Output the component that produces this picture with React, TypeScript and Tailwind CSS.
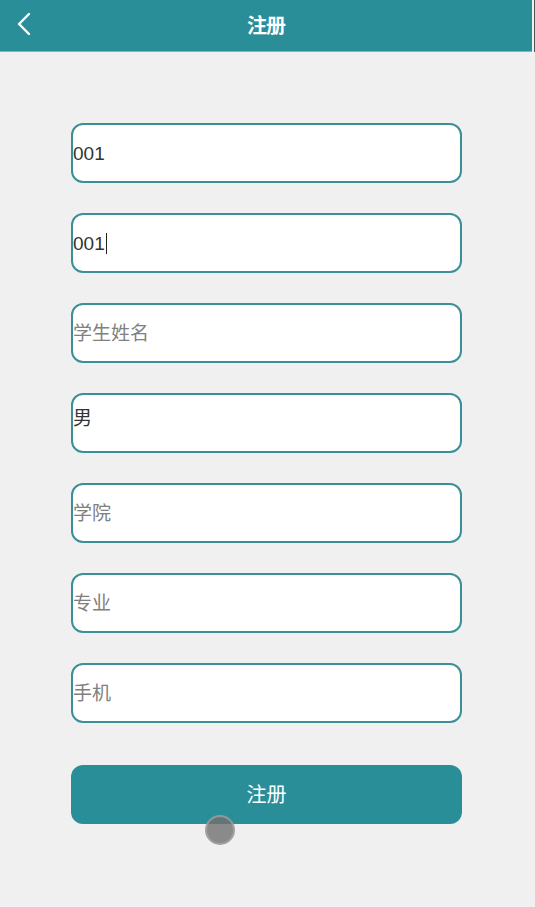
import React from "react";

const fields: { value?: string; placeholder: string; caret?: boolean; up?: boolean }[] = [
  { value: "001", placeholder: "学号" },
  { value: "001", placeholder: "密码", caret: true },
  { placeholder: "学生姓名" },
  { value: "男", placeholder: "性别", up: true },
  { placeholder: "学院" },
  { placeholder: "专业" },
  { placeholder: "手机" },
];

export default function App() {
  return (
    <div
      className="relative w-[535px] h-[907px] bg-[#f0f0f0] overflow-hidden"
      style={{ fontFamily: '"Liberation Sans", "Noto Sans CJK SC", sans-serif' }}
    >
      <div className="flex">
        <div className="relative w-[532px] h-[52px] bg-[#2a8e99] border-b border-[#7fb8bf] flex items-center justify-center">
          <svg className="absolute left-[14px] top-[12px]" width="20" height="24" viewBox="0 0 20 24">
            <path d="M15 2 L5 12 L15 22" fill="none" stroke="#ffffff" strokeWidth="2.4" strokeLinecap="round" strokeLinejoin="round" />
          </svg>
          <span className="text-white text-[20px] font-bold tracking-[-1px]">注册</span>
        </div>
        <div className="w-[3px] h-[52px] bg-[#f0f0f0] border-r border-[#555]" />
      </div>

      <div className="mt-[71px] ml-[71px] w-[391px] flex flex-col gap-[30px]">
        {fields.map((f, i) => (
          <div
            key={i}
            className="h-[60px] bg-white border-2 border-[#3b8f98] rounded-[12px] flex items-center"
          >
            <span
              className={
                "flex items-center text-[19px] leading-none " +
                (f.value ? "text-[#333333]" : "text-[#808080]") +
                (f.up ? " -mt-[9px]" : "")
              }
            >
              {f.value ?? f.placeholder}
              {f.caret && <span className="ml-[1px] w-[1px] h-[21px] bg-[#222]" />}
            </span>
          </div>
        ))}
      </div>

      <div className="relative mt-[42px] ml-[71px] w-[391px]">
        <button className="w-full h-[59px] bg-[#2a8e99] rounded-[12px] text-white text-[20px] flex items-center justify-center">
          注册
        </button>
        <div className="absolute left-[134px] top-[50px] w-[30px] h-[30px] rounded-full bg-[#707070]/80 border-2 border-[#b0b0b0]/60" />
      </div>
    </div>
  );
}
